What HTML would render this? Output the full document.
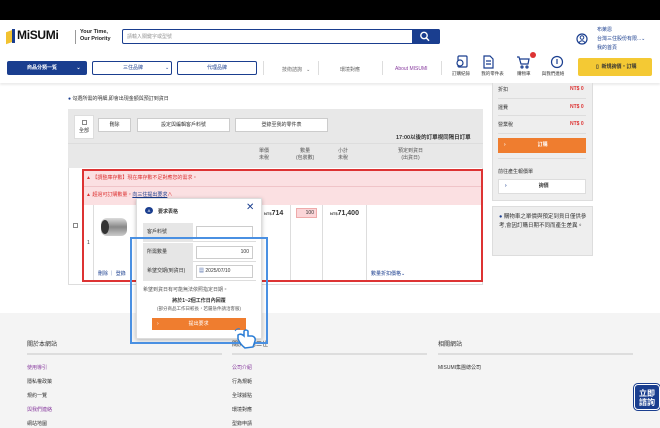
<!DOCTYPE html>
<html><head><meta charset="utf-8"><style>
*{margin:0;padding:0;box-sizing:border-box}
body{width:660px;height:428px;overflow:hidden;position:relative;background:#fff;font-family:"Liberation Sans","Noto Sans CJK TC",sans-serif;font-size:5px;color:#333}
.a{position:absolute}
.btn{position:absolute;background:#fff;border:1px solid #ccc;text-align:center;font-size:5px;line-height:12px}
.row{position:absolute;left:143px;width:113px;height:19px;border-bottom:1px solid #ddd}
.row .l{position:absolute;left:0;top:0;width:50px;height:19px;background:#e6e6e6;font-size:5px;line-height:19px;padding-left:4px}
.row .i{position:absolute;left:53px;top:3px;width:57px;height:13px;border:1px solid #ccc;background:#fff;font-size:5px;line-height:11px}
.fl{position:absolute;font-size:5px}
</style></head><body>
<div class="a" style="left:0;top:0;width:660px;height:20px;background:#000"></div>
<div class="a" style="left:0;top:20px;width:660px;height:63px;background:#fff;box-shadow:0 2px 2px rgba(0,0,0,.08)"></div>
<!-- logo -->
<div class="a" style="left:6px;top:31px;width:7px;height:12px;background:#f2c230;transform:skewY(-20deg)"></div>
<div class="a" style="left:12px;top:29px;width:3px;height:14px;background:#1a3e8f"></div>
<div class="a" style="left:17px;top:28px;font-size:12px;font-weight:bold;color:#111;letter-spacing:-.3px">MiSUMi</div>
<div class="a" style="left:75px;top:30px;width:1px;height:14px;background:#999"></div>
<div class="a" style="left:80px;top:29px;font-size:5.5px;line-height:7px;color:#222;font-weight:bold">Your Time,<br>Our Priority</div>
<div class="a" style="left:122px;top:29px;width:318px;height:15px;border:1.5px solid #1a3e8f;border-radius:2px;background:#fff"></div>
<div class="a" style="left:127px;top:33px;font-size:5px;color:#999">請輸入關鍵字或型號</div>
<div class="a" style="left:412px;top:29px;width:28px;height:15px;background:#1a3e8f;border-radius:0 2px 2px 0"></div>
<svg class="a" style="left:419px;top:31px" width="12" height="11"><circle cx="5" cy="4.5" r="3.2" stroke="#fff" stroke-width="1.4" fill="none"/><path d="M7.4 7 L10 9.8" stroke="#fff" stroke-width="1.5"/></svg>
<svg class="a" style="left:576px;top:33px" width="12" height="12"><circle cx="6" cy="6" r="5" stroke="#1a3e8f" stroke-width="1.2" fill="none"/><circle cx="6" cy="4.5" r="1.8" stroke="#1a3e8f" fill="none"/><path d="M3 9.5 Q6 6 9 9.5" stroke="#1a3e8f" fill="none"/></svg>
<div class="a" style="left:597px;top:26px;font-size:5px;line-height:9px;color:#1a3e8f">布萊恩<br>台灣三住股份有限...⌄<br>我的首頁</div>
<!-- nav -->
<div class="a" style="left:7px;top:61px;width:80px;height:14px;background:#1a3e8f;border-radius:2px;color:#fff;font-size:5px;font-weight:bold;line-height:14px;padding-left:20px">商品分類一覧 <span style="margin-left:18px">⌄</span></div>
<div class="a" style="left:92px;top:61px;width:80px;height:14px;border:1px solid #1a3e8f;border-radius:2px;color:#1a3e8f;font-size:5px;line-height:12px;padding-left:30px">三住品牌<span style="margin-left:22px">⌄</span></div>
<div class="a" style="left:177px;top:61px;width:80px;height:14px;border:1px solid #1a3e8f;border-radius:2px;color:#1a3e8f;font-size:5px;line-height:12px;text-align:center">代理品牌</div>
<div class="a" style="left:263px;top:61px;width:1px;height:14px;background:#ddd"></div>
<div class="a" style="left:282px;top:66px;color:#666">技術諮詢 &nbsp; ⌄</div>
<div class="a" style="left:318px;top:61px;width:1px;height:14px;background:#ddd"></div>
<div class="a" style="left:340px;top:66px;color:#666">環境對應</div>
<div class="a" style="left:382px;top:61px;width:1px;height:14px;background:#ddd"></div>
<div class="a" style="left:395px;top:66px;color:#8a3ea0">About MISUMI</div>
<div class="a" style="left:441px;top:61px;width:1px;height:14px;background:#ddd"></div>
<svg class="a" style="left:456px;top:55px" width="110" height="14" stroke="#1a3e8f" fill="none" stroke-width="1.2"><rect x="2" y="1" width="9" height="11" rx="1"/><circle cx="4" cy="8" r="3" fill="#fff"/><path d="M28 1h6l3 3v9h-9z M30 6h5 M30 9h5"/><path d="M61 2h2l2 7h7l1-5h-9"/><circle cx="66" cy="12" r="1"/><circle cx="71" cy="12" r="1"/><circle cx="101" cy="7" r="5.5"/><path d="M101 4v5"/></svg>
<div class="a" style="left:530px;top:52px;width:6px;height:6px;background:#d33;border-radius:50%"></div>
<div class="a" style="left:452px;top:71px;font-size:4.5px;color:#333;word-spacing:10px">訂購紀錄 我的零件表 <span style="margin-left:2px">購物車</span> 與我們連絡</div>
<div class="a" style="left:578px;top:58px;width:74px;height:18px;background:#f4c934;border-radius:2px;font-size:5px;font-weight:bold;line-height:18px;padding-left:18px">▯ &nbsp;新規詢價・訂購</div>
<!-- right panel -->
<div class="a" style="left:492px;top:83px;width:101px;height:118px;background:#eee;border:1px solid #ddd;border-top:none"></div>
<div class="a" style="left:498px;top:86px;font-size:5px">折扣</div><div class="a" style="left:570px;top:86px;color:#d33;font-weight:bold">NT$ 0</div>
<div class="a" style="left:498px;top:98px;width:88px;height:1px;background:#ddd"></div>
<div class="a" style="left:498px;top:104px">運費</div><div class="a" style="left:570px;top:104px;color:#d33;font-weight:bold">NT$ 0</div>
<div class="a" style="left:498px;top:115px;width:88px;height:1px;background:#ddd"></div>
<div class="a" style="left:498px;top:121px">營業稅</div><div class="a" style="left:570px;top:121px;color:#d33;font-weight:bold">NT$ 0</div>
<div class="a" style="left:498px;top:133px;width:88px;height:1px;background:#ddd"></div>
<div class="a" style="left:498px;top:138px;width:88px;height:15px;background:#ef7d2f;color:#fff;font-size:5px;line-height:15px;font-weight:bold"><span style="margin-left:6px">›</span><span style="margin-left:32px">訂購</span></div>
<div class="a" style="left:498px;top:158px;width:88px;height:1px;background:#ddd"></div>
<div class="a" style="left:498px;top:168px">前往產生報價單</div>
<div class="a" style="left:498px;top:179px;width:88px;height:15px;background:#fff;border:1px solid #ddd;font-size:5px;line-height:13px;font-weight:bold"><span style="margin-left:6px;color:#1a3e8f">›</span><span style="margin-left:32px">詢價</span></div>
<div class="a" style="left:492px;top:206px;width:101px;height:50px;background:#eee;border:1px solid #ddd"></div>
<div class="a" style="left:499px;top:213px;width:90px;font-size:5.5px;line-height:9px;color:#333"><span style="color:#1a3e8f">●</span> 購物車之單價與預定到貨日僅供參考,會因訂購日期不同而產生差異。</div>
<!-- left -->
<div class="a" style="left:68px;top:95px;font-size:5px"><span style="color:#1a3e8f">●</span> 勾選所需的明細,即會出現金額與預訂到貨日</div>
<div class="a" style="left:68px;top:109px;width:415px;height:59px;background:#e8e8e8"></div>
<div class="a" style="left:74px;top:115px;width:20px;height:24px;background:#fff;border:1px solid #ddd;text-align:center;padding-top:4px"><div style="width:5px;height:5px;border:1px solid #888;margin:0 auto 2px"></div>全部</div>
<div class="btn" style="left:98px;top:118px;width:33px;height:14px">刪除</div>
<div class="btn" style="left:137px;top:118px;width:93px;height:14px">設定與編輯客戶料號</div>
<div class="btn" style="left:235px;top:118px;width:93px;height:14px">登錄至我的零件表</div>
<div class="a" style="left:396px;top:133px;font-size:5.5px;font-weight:bold">17:00以後的訂單視同隔日訂單</div>
<div class="a" style="left:68px;top:143px;width:415px;height:1px;background:#ddd"></div>
<div class="a" style="left:259px;top:148px;text-align:center;line-height:7px;color:#555">單價<br>未稅</div>
<div class="a" style="left:296px;top:148px;text-align:center;line-height:7px;color:#555">數量<br>(包裝數)</div>
<div class="a" style="left:338px;top:148px;text-align:center;line-height:7px;color:#555">小計<br>未稅</div>
<div class="a" style="left:398px;top:148px;text-align:center;line-height:7px;color:#555">預定到貨日<br>(出貨日)</div>
<div class="a" style="left:68px;top:168px;width:415px;height:117px;border:1px solid #ddd;border-top:none;background:#fff"></div>
<div class="a" style="left:82px;top:169px;width:401px;height:36px;background:#fbe0e2"></div>
<div class="a" style="left:82px;top:186px;width:401px;height:1px;background:#f0c4c8"></div>
<div class="a" style="left:86px;top:174px;color:#d33;font-size:5px">▲ 【調整庫存數】現在庫存數不足對應您的需求。</div>
<div class="a" style="left:86px;top:191px;color:#d33;font-size:5px">▲ 超過可訂購數量，<span style="color:#1a3e8f;text-decoration:underline">向三住提出要求</span>∧</div>
<div class="a" style="left:93px;top:205px;width:1px;height:77px;background:#ddd"></div>
<div class="a" style="left:261px;top:205px;width:1px;height:77px;background:#ddd"></div>
<div class="a" style="left:290px;top:205px;width:1px;height:77px;background:#ddd"></div>
<div class="a" style="left:322px;top:205px;width:1px;height:77px;background:#ddd"></div>
<div class="a" style="left:366px;top:205px;width:1px;height:77px;background:#ddd"></div>
<div class="a" style="left:73px;top:223px;width:5px;height:5px;border:1px solid #888"></div>
<div class="a" style="left:87px;top:240px">1</div>
<div class="a" style="left:101px;top:218px;width:26px;height:18px;border-radius:6px;background:linear-gradient(#ddd,#888 50%,#ccc);"></div>
<div class="a" style="left:101px;top:220px;width:8px;height:14px;border-radius:50%;background:#333"></div>
<div class="a" style="left:264px;top:210px;font-size:7px;font-weight:bold"><span style="font-size:4px">NT$</span>714</div>
<div class="a" style="left:296px;top:208px;width:21px;height:10px;background:#fbd5d8;border:1px solid #eaa;font-size:5px;text-align:right;padding-right:2px;line-height:8px">100</div>
<div class="a" style="left:330px;top:210px;font-size:7px;font-weight:bold"><span style="font-size:4px">NT$</span>71,400</div>
<div class="a" style="left:98px;top:270px;color:#1a3e8f">刪除 ｜ 登錄</div>
<div class="a" style="left:371px;top:270px;color:#1a3e8f">數量折扣價格⌄</div>
<div class="a" style="left:82px;top:169px;width:401px;height:113px;border:2px solid #d33"></div>
<!-- footer -->
<div class="a" style="left:0;top:313px;width:660px;height:115px;background:#f4f4f4"></div>
<div class="a" style="left:27px;top:339px;font-size:6px;color:#333">關於本網站</div>
<div class="a" style="left:232px;top:339px;font-size:6px;color:#333">關於台灣三住</div>
<div class="a" style="left:438px;top:339px;font-size:6px;color:#333">相關網站</div>
<div class="a" style="left:27px;top:353px;width:195px;height:2px;background:#ddd"></div>
<div class="a" style="left:232px;top:353px;width:195px;height:2px;background:#ddd"></div>
<div class="a" style="left:438px;top:353px;width:195px;height:2px;background:#ddd"></div>
<div class="fl" style="left:27px;top:364px;color:#8a3ea0">使用導引</div>
<div class="fl" style="left:27px;top:378px">隱私權政策</div>
<div class="fl" style="left:27px;top:392px">規約一覽</div>
<div class="fl" style="left:27px;top:406px;color:#8a3ea0">與我們連絡</div>
<div class="fl" style="left:27px;top:420px">網站地圖</div>
<div class="fl" style="left:232px;top:364px;color:#8a3ea0">公司介紹</div>
<div class="fl" style="left:232px;top:378px">行為規範</div>
<div class="fl" style="left:232px;top:392px">全球據點</div>
<div class="fl" style="left:232px;top:406px">環境對應</div>
<div class="fl" style="left:232px;top:420px">型錄申請</div>
<div class="fl" style="left:438px;top:364px">MISUMI集團總公司</div>
<div class="a" style="left:634px;top:384px;width:26px;height:26px;background:#1a3e8f;border-radius:4px;color:#fff;font-size:8px;font-weight:bold;line-height:9px;text-align:center;padding-top:4px;border:1.5px solid #fff;outline:1px solid #1a3e8f">立即<br>諮詢</div>
<!-- popup -->
<div class="a" style="left:136px;top:198px;width:126px;height:141px;background:#fff;border:1px solid #ddd;box-shadow:0 1px 4px rgba(0,0,0,.25)"></div>
<div class="a" style="left:145px;top:207px;width:8px;height:7px;background:#1a3e8f;border-radius:50%;color:#fff;font-size:4px;text-align:center;line-height:7px">A</div>
<div class="a" style="left:158px;top:208px;font-size:5px;font-weight:bold">要求表格</div>
<div class="a" style="left:246px;top:202px;font-size:10px;color:#1a3e8f">✕</div>
<div class="row" style="top:223px"><div class="l">客戶料號</div><div class="i"></div></div>
<div class="row" style="top:243px"><div class="l">所需數量</div><div class="i" style="text-align:right;padding-right:3px">100</div></div>
<div class="row" style="top:262px"><div class="l">希望交期(到貨日)</div><div class="i" style="padding-left:2px"><span style="color:#1a3e8f">▦</span> 2025/07/10</div></div>
<div class="a" style="left:143px;top:286px;font-size:5px;color:#555">希望到貨日有可能無法依照指定日期。</div>
<div class="a" style="left:136px;top:297px;width:126px;text-align:center;font-size:5px;font-weight:bold">將於1~2個工作日內回覆</div>
<div class="a" style="left:136px;top:306px;width:126px;text-align:center;font-size:4.5px;color:#555">(部分商品工作日較長，若屬急件請洽客服)</div>
<div class="a" style="left:152px;top:318px;width:94px;height:12px;background:#ef7d2f;color:#fff;font-size:5px;line-height:12px"><span style="margin-left:5px">›</span><span style="margin-left:30px">提出要求</span></div>
<div class="a" style="left:130px;top:237px;width:138px;height:107px;border:2px solid #4a90e2"></div>
<svg class="a" style="left:234px;top:327px" width="24" height="22"><path d="M4 8 Q7 6 10 9 L10 4 Q12 2 14 4 L14 9 L18 9 Q22 10 21 14 L19 20 L11 21 Q6 17 4 12 Z" fill="#fff" stroke="#2a7dd6" stroke-width="1.5"/><path d="M1 4 Q3 1 6 2" stroke="#2a7dd6" fill="none"/></svg>
</body></html>
